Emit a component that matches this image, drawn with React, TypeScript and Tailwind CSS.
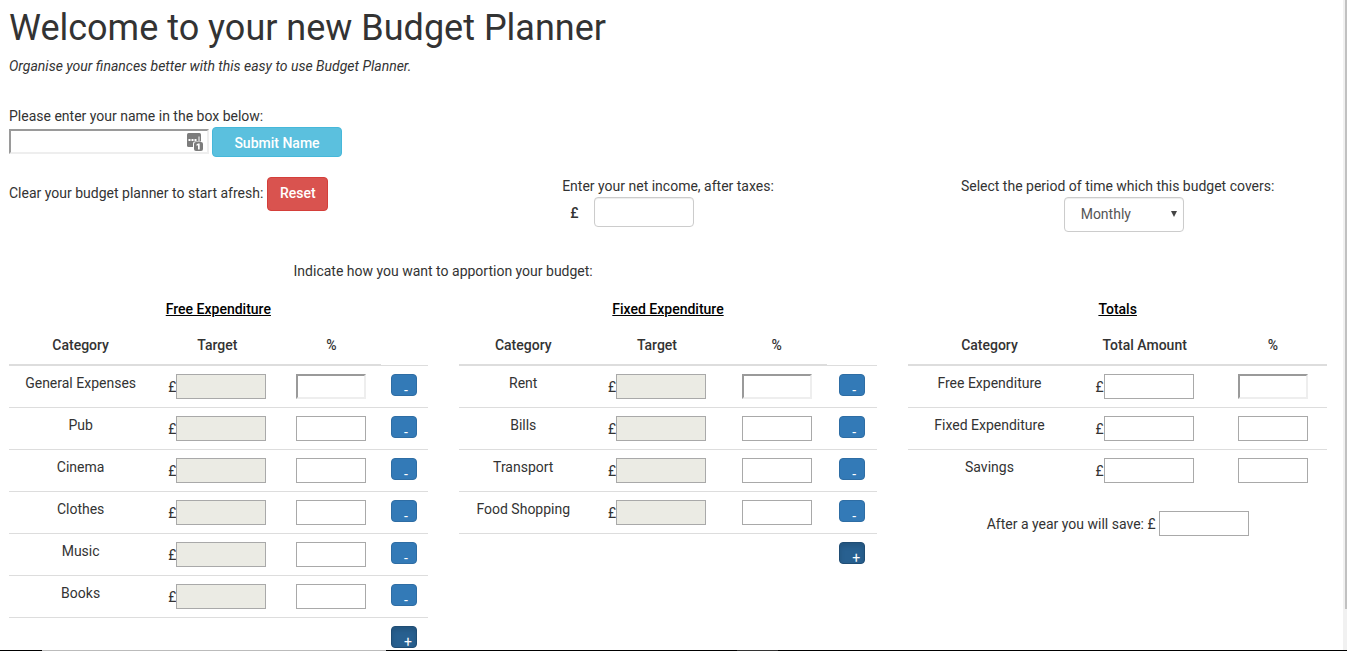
import React from "react";

type Row = { name: string };

const freeRows: Row[] = ["General Expenses", "Pub", "Cinema", "Clothes", "Music", "Books"].map((name) => ({ name }));
const fixedRows: Row[] = ["Rent", "Bills", "Transport", "Food Shopping"].map((name) => ({ name }));
const totalRows: Row[] = ["Free Expenditure", "Fixed Expenditure", "Savings"].map((name) => ({ name }));

const flatBox = "block h-[25px] border border-[#a9a9a9] px-1 outline-none";
const insetBox =
  "block h-[25px] border-2 border-t-[#9a9a9a] border-l-[#9a9a9a] border-r-[#eeeeee] border-b-[#eeeeee] bg-white px-1 outline-none";

function Amount({ label, disabled }: { label: string; disabled?: boolean }) {
  return (
    <label className="flex items-center justify-center">
      £
      <input
        aria-label={label}
        disabled={disabled}
        className={`${flatBox} w-[90px] ${disabled ? "bg-[#ebebe4]" : "bg-white"}`}
      />
    </label>
  );
}

function RowButton({ kind, label }: { kind: "add" | "remove"; label: string }) {
  return (
    <button
      type="button"
      aria-label={label}
      className={`mx-auto flex h-[22px] w-[26px] items-start rounded border pt-[5px] pl-3 leading-5 text-white ${
        kind === "add"
          ? "border-[#204d74] bg-[#286090] shadow-[inset_0_3px_5px_rgba(0,0,0,0.125)]"
          : "border-[#2e6da4] bg-[#337ab7]"
      }`}
    >
      {kind === "add" ? "+" : "-"}
    </button>
  );
}

type TableProps = {
  title: string;
  rows: Row[];
  amountHeading: string;
  columns: string[];
  editable?: boolean;
};

function BudgetTable({ title, rows, amountHeading, columns, editable }: TableProps) {
  return (
    <table className="w-full table-fixed border-collapse text-center">
      <caption className="pb-2 font-medium text-black underline">{title}</caption>
      <colgroup>
        {columns.map((width, i) => (
          <col key={i} className={width} />
        ))}
      </colgroup>
      <thead>
        <tr>
          {["Category", amountHeading, "%"].map((heading) => (
            <th key={heading} scope="col" className="border-b-2 border-[#dddddd] px-2 pt-2 pb-[9px] font-medium">
              {heading}
            </th>
          ))}
          {editable && <td />}
        </tr>
      </thead>
      <tbody>
        {rows.map(({ name }, i) => (
          <tr key={name} className="border-t border-[#dddddd] align-top">
            <td className="pt-[7px] pb-2">{name}</td>
            <td className="py-2">
              <Amount label={`${name} amount`} disabled={editable} />
            </td>
            <td className="py-2">
              <input
                aria-label={`${name} percentage`}
                className={`${i === 0 ? insetBox : flatBox} mx-auto w-[70px]`}
              />
            </td>
            {editable && (
              <td className="py-2">
                <RowButton kind="remove" label={`Remove ${name}`} />
              </td>
            )}
          </tr>
        ))}
        {editable && (
          <tr className="border-t border-[#dddddd] align-top">
            <td colSpan={3} />
            <td className="pt-2">
              <RowButton kind="add" label={`Add to ${title}`} />
            </td>
          </tr>
        )}
      </tbody>
    </table>
  );
}

function KeyIcon() {
  return (
    <svg viewBox="0 0 17 18" className="h-[18px] w-[17px]" aria-hidden="true">
      <rect x="0" y="0" width="14" height="14" rx="1.5" fill="#7c7c7c" />
      <path d="M1.5 6h2v2h-2zM4.5 6h2v2h-2zM7.5 6h2v2h-2zM11.5 3.5h1v4.5h-1z" fill="#fff" />
      <path d="M6 14V10.5a2 2 0 0 1 2-2h6V14z" fill="#fff" />
      <rect x="7" y="9" width="9" height="9" rx="2" fill="#7c7c7c" />
      <path d="M11 10.5h1.7v6H11v-4.3l-1.5.5v-1.3z" fill="#fff" />
    </svg>
  );
}

export default function App() {
  return (
    <div className="flex h-screen flex-col overflow-hidden bg-white font-['Roboto',sans-serif] text-[14px] leading-5 text-[#333333]">
      <div className="flex min-h-0 flex-1">
        <main className="min-w-0 flex-1 overflow-hidden pt-2 pr-4 pl-[9px]">
          <h1 className="text-[36px] leading-10">Welcome to your new Budget Planner</h1>
          <p className="mt-2 italic">Organise your finances better with this easy to use Budget Planner.</p>

          <form className="mt-[30px]" onSubmit={(e) => e.preventDefault()}>
            <label htmlFor="name" className="block">
              Please enter your name in the box below:
            </label>
            <div className="mt-px flex items-start gap-[3px]">
              <div className="relative mt-0.5">
                <input id="name" className={`${insetBox} w-[200px]`} />
                <span className="absolute top-1 right-[5px]">
                  <KeyIcon />
                </span>
              </div>
              <button
                type="submit"
                className="h-[30px] w-[130px] rounded border border-[#46b8da] bg-[#5bc0de] pt-px font-medium text-white"
              >
                Submit Name
              </button>
            </div>
          </form>

          <section className="mt-[19px] grid grid-cols-3 items-start gap-[31px]">
            <div className="flex items-baseline gap-1 pt-px">
              <span>Clear your budget planner to start afresh:</span>
              <button
                type="button"
                className="h-[34px] w-[61px] rounded border border-[#d43f3a] bg-[#d9534f] pb-0.5 font-medium text-white"
              >
                Reset
              </button>
            </div>
            <div className="flex flex-col items-center gap-px">
              <label htmlFor="income">Enter your net income, after taxes:</label>
              <div className="flex items-center gap-[15px] pr-[72px]">
                <span className="pt-0.5 font-medium">£</span>
                <input
                  id="income"
                  className="h-[30px] w-[100px] rounded border border-[#cccccc] px-3 shadow-[inset_0_1px_1px_rgba(0,0,0,0.075)] outline-none"
                />
              </div>
            </div>
            <div className="flex flex-col items-center gap-px">
              <label htmlFor="period">Select the period of time which this budget covers:</label>
              <div className="pl-3">
                <div className="relative">
                  <select
                    id="period"
                    defaultValue="Monthly"
                    className="block h-[35px] w-[120px] appearance-none rounded border border-[#cccccc] bg-white pb-px pl-4 text-[#555555] shadow-[inset_0_1px_1px_rgba(0,0,0,0.075)] outline-none"
                  >
                    <option>Weekly</option>
                    <option>Monthly</option>
                    <option>Yearly</option>
                  </select>
                  <svg
                    viewBox="0 0 6 6"
                    className="pointer-events-none absolute top-[14px] right-[7px] size-1.5"
                    aria-hidden="true"
                  >
                    <path d="M0 0h6L3 6z" fill="#444" />
                  </svg>
                </div>
              </div>
            </div>
          </section>

          <section className="mt-[29px] grid grid-cols-3 gap-x-[31px]">
            <p className="col-span-2 text-center">Indicate how you want to apportion your budget:</p>
          </section>

          <section className="mt-[18px] grid grid-cols-3 items-start gap-x-[31px]">
            <BudgetTable
              title="Free Expenditure"
              rows={freeRows}
              amountHeading="Target"
              columns={["w-[143px]", "w-[130px]", "w-[98px]", "w-[47px]"]}
              editable
            />
            <BudgetTable
              title="Fixed Expenditure"
              rows={fixedRows}
              amountHeading="Target"
              columns={["w-[129px]", "w-[138px]", "w-[101px]", "w-[50px]"]}
              editable
            />
            <div>
              <BudgetTable
                title="Totals"
                rows={totalRows}
                amountHeading="Total Amount"
                columns={["w-[162px]", "w-[148px]", "w-[108px]"]}
              />
              <label className="mt-5 flex items-center justify-center gap-[3px]">
                After a year you will save: £
                <input className={`${flatBox} w-[90px] bg-white`} />
              </label>
            </div>
          </section>
        </main>
        <div className="w-1 bg-[#f1f1f1] pl-0.5" aria-hidden="true">
          <div className="h-[609px] bg-[#c1c1c1]" />
        </div>
      </div>
      <div className="flex h-px bg-black" aria-hidden="true">
        <div className="ml-[42px] w-[344px] bg-[#bbbbbb]" />
        <div className="ml-[351px] w-[41px] bg-[#333333]" />
      </div>
    </div>
  );
}
